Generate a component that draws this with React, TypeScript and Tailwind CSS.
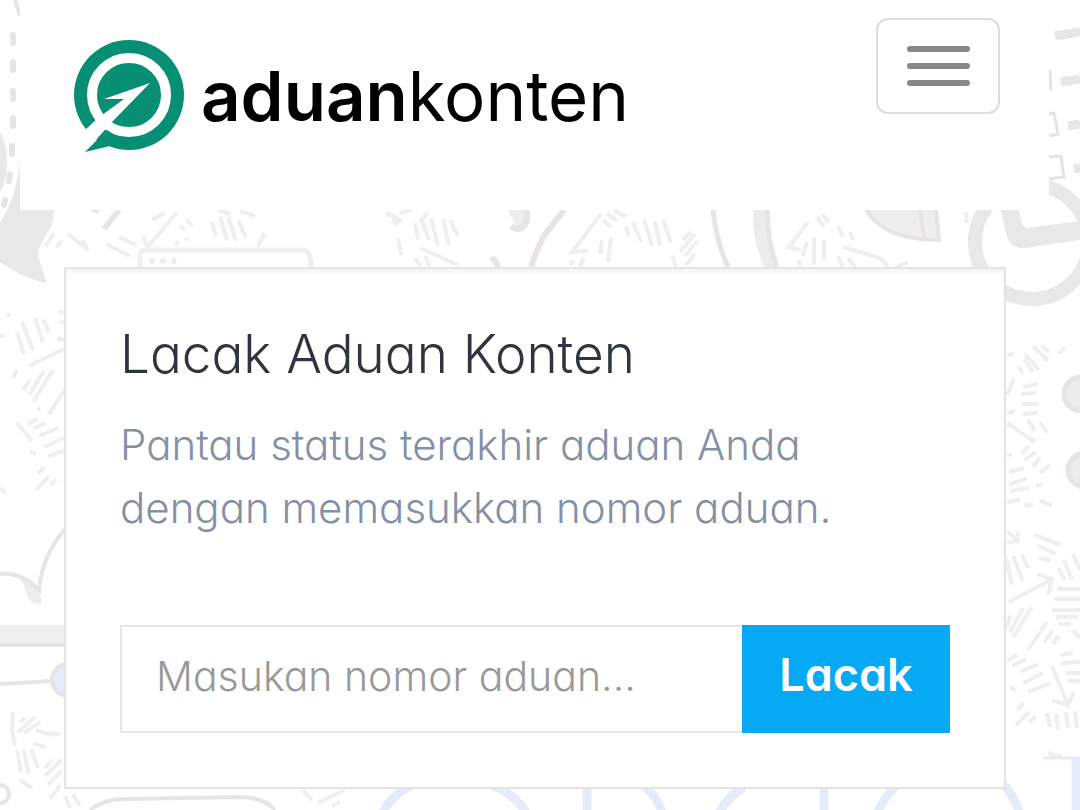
import React, { useState } from 'react';

const HATCHES = [
  // top strip
  'M152 220L165 213M177 212L148 247M186 219L192 226M180 226L185 230M212 222L216 237M220 217L227 240M228 217L236 241M238 220L246 238M218 210L230 214M240 211L255 216M258 246L265 233M45 247L54 233M56 247L62 241M68 234L88 250L82 240M119 237L136 245M106 244L130 256M143 236L147 247M186 238L187 241M176 245L178 241',
  'M386 212L402 222M392 220L398 225M400 213L412 210M420 222L428 212M415 223L418 240M421 218L429 240M431 218L438 246M443 219L449 245M450 220L458 236M398 238L401 255M420 248L458 265M415 258L420 266M425 256L430 266',
  'M601 214L572 252L588 251M603 220L611 227M607 213L617 221M614 210L626 217M602 240L600 254M611 238L608 262M626 227L629 236M633 222L641 242M644 219L652 246M655 221L660 246M663 220L671 243M683 240L691 232M680 252L695 234M685 256L697 241M672 256L676 267M686 265L695 254M570 265L573 260M580 266L584 258',
  'M808 222L789 247L801 250M817 217L824 227M822 215L829 222M838 226L843 237M850 232L853 240M807 242L803 256M814 237V265M824 240V260M843 247L880 258L888 266M798 260L801 267M838 256L843 267M848 258L855 267M897 267L908 262M966 212L967 223',
  // left column
  'M8 313L9 317M22 322L33 350M17 332L24 354M35 318L43 343M43 319L49 332M0 337L4 335M29 366L66 348M58 311L66 314M59 321L66 323M57 338L66 341M13 378L17 370M23 390L30 380M29 395L44 371M33 402L53 370M49 414L66 388M38 411L40 407M17 423L32 441M28 424L37 419M33 429L45 423M39 436L58 428M44 447L66 437M48 456L66 450M30 451L36 454M38 474L44 467M36 490L49 476M50 484L57 480M0 488L6 494',
  'M13 712L12 730L15 745M20 722L25 718M18 732L35 717M24 733L40 722M36 730L52 735M33 743L45 747M17 750L21 772M23 749L29 774M31 749L38 768M20 780L32 788M45 768L52 760M45 776L61 760M48 785L62 770M44 733L60 734M50 799L60 785M65 796L70 808M73 794L80 806',
  // right column
  'M1007 355L1014 354M1025 354L1039 370M1033 346L1048 361M1042 346L1049 352M1018 366L1023 373M1024 359L1033 372M1058 354L1065 348M1007 395L1014 379M1023 387L1038 384M1021 394L1036 393M1022 404H1038M1023 414L1038 413M1028 420L1035 431M1040 422L1047 433M1007 423L1035 442M1007 413L1015 411M1022 453L1029 446M1025 460L1036 452M1033 467L1040 457M1040 473L1050 465M1007 456L1012 454M1009 472L1024 468M1009 485L1027 478M1010 491L1030 488M1036 486L1043 484',
  'M1007 502L1020 500M1040 500L1052 506M1025 506L1033 504M1007 531L1017 540L1018 531M1007 543L1017 540M1034 535L1061 545M1038 546L1056 554M1039 558L1050 561M1006 558L1012 585M1013 556L1023 581M1022 555L1028 568M1009 602L1052 579M1037 574L1052 579L1048 595M1058 568L1065 580M1064 560L1072 580M1073 554L1080 570M1057 589H1080M1054 599H1080M1052 610H1080M1056 617H1078M1058 624H1071M1007 628L1010 615M1010 632L1023 608M1013 637L1032 607M1028 650L1047 622M1044 643L1052 631M1053 644L1059 636M1073 630L1080 638',
  'M1007 661L1017 655M1012 666L1026 659M1020 672L1038 664M1023 683L1043 673M1028 692L1050 683M1052 666L1068 705L1074 692M1052 700L1068 705M1060 655L1073 653M1061 663L1080 662M1066 673H1080M1067 681H1080M1010 687L1016 691M1018 710L1023 703M1016 725L1029 712M1029 722L1036 717M1047 713L1050 727M1056 714L1058 730M1066 712L1068 728M1075 711L1077 728M1048 753L1062 757',
  // below the card
  'M303 790L312 800M318 803L345 790M332 806L340 802',
];

function DoodleBackground() {
  return (
    <svg
      aria-hidden="true"
      className="absolute inset-0 w-full h-full"
      viewBox="0 0 1080 810"
      preserveAspectRatio="xMidYMin slice"
      fill="none"
    >
      <g stroke="#efefef" strokeWidth={4}>
        {HATCHES.map((d, index) => (
          <path key={index} d={d} />
        ))}
      </g>

      {/* Solid grey shapes */}
      <g fill="#e8e8e8">
        <path d="M0 132Q8 145 7 165Q6 182 0 192Z" />
        <path d="M0 222Q16 200 20 160V210H54C54 232 38 240 38 257L47 283Q26 280 0 262Z" />
        <path d="M1001 210L1006 233Q1010 250 1026 248L1080 240V221L1027 228Q1021 227 1019 210Z" />
      </g>
      <circle cx={1032} cy={242} r={57} stroke="#e8e8e8" strokeWidth={14} />
      <path d="M1055 36L1080 32M1061 82L1080 79M1068 126L1080 124M1074 169L1080 168" stroke="#e6e6e6" strokeWidth={9} />
      <path d="M1049 114L1054 113L1058 134L1049 136M1049 157L1061 156L1064 177L1049 179M1050 70L1051 91" stroke="#e4e4e4" strokeWidth={3} />

      {/* Browser window */}
      <path d="M140 268V256Q140 250 146 250H303Q311 250 311 268" stroke="#efefef" strokeWidth={5} />
      <g fill="#eeeeee">
        <circle cx={152} cy={261} r={3} />
        <circle cx={163} cy={261} r={3} />
        <circle cx={174} cy={261} r={3} />
      </g>

      {/* Hand drawn outlines */}
      <path d="M508 210H526Q529 225 519 229Q512 222 508 210Z" fill="#ededed" />
      <path d="M753 210H768Q768 245 778 267H764Q752 240 753 210Z" fill="#ececec" />
      <path d="M866 210C880 232 905 240 939 240L937 210Z" fill="#eeeeee" />
      <path d="M20 575L39 590L42 603Q34 607 28 597Z" fill="#ededeb" />
      <rect y={625} width={66} height={20} fill="#efefed" />
      <g stroke="#e7e4e1" strokeWidth={4}>
        <path d="M13 35V43M13 62V70M13 91V99M13 118V126M12 146V154M10 174L9 181M5 200L4 205" strokeWidth={6} strokeLinecap="round" />
        <path d="M15 0L20 16" />
        <path d="M119 210L104 229" strokeWidth={6} />
        <path d="M92 210L99 211" />
        <path d="M526 210Q530 225 519 229Q514 229 511 226M564 210L543 237Q537 250 531 267M492 257L499 267" strokeWidth={6} />
        <path d="M713 210Q716 240 728 267M767 210Q768 245 777 267" strokeWidth={5} />
        <path d="M866 210C880 232 905 240 939 240L936 210M920 210L924 238" />
        <path d="M0 574Q22 572 39 590Q42 555 66 528" />
        <path d="M0 645H66M0 684L52 681" />
        <circle cx={68} cy={680} r={16} fill="#e6eafc" />
        <circle cx={0} cy={794} r={9} />
        <path d="M90 810Q104 799 125 799L240 797Q265 798 275 810" />
        <circle cx={1081} cy={394} r={17} fill="#ececec" strokeWidth={5} />
        <circle cx={1085} cy={470} r={17} fill="#ececec" strokeWidth={5} />
      </g>

      {/* Blue lettering cut off by the bottom edge */}
      <g stroke="#e6ebfa" strokeWidth={9}>
        <path d="M383 812Q400 780 450 776Q505 780 526 812" />
        <path d="M587 788V810M644 786Q656 795 662 812M720 812Q728 796 744 787M824 788V810M878 812Q884 797 896 786M1003 784Q1014 796 1019 812M1076 759V810" />
        <path d="M1043 758H1080" strokeWidth={3} />
      </g>
    </svg>
  );
}

function LogoMark() {
  return (
    <svg aria-hidden="true" className="w-28 h-28 shrink-0" viewBox="73 39 112 112">
      <circle cx={129} cy={94} r={55} fill="#068f72" />
      <circle cx={129} cy={94} r={37} fill="none" stroke="#ffffff" strokeWidth={10} />
      <path d="M150 82L104 98L124 98L98 117L86 128L70 142L85 151L112 121Z" fill="#ffffff" />
      <path d="M85 151L107 129L118 136L124 146L110 145Z" fill="#068f72" />
    </svg>
  );
}

export default function App() {
  const [ticket, setTicket] = useState('');

  const handleSubmit = (e: React.FormEvent) => {
    e.preventDefault();
  };

  return (
    <div className="relative min-h-screen overflow-hidden bg-white pb-5 font-['Inter',sans-serif] font-light">
      <DoodleBackground />

      {/* Header */}
      <header className="relative ml-5 mr-[31px] flex h-[210px] items-start justify-between bg-white pl-[53px] pr-[49px] pt-[18px]">
        <a href="#" className="mt-[22px] flex items-center gap-4 text-[69px] leading-[112px] text-black">
          <LogoMark />
          <span>
            <span className="font-semibold">aduan</span>
            <span className="font-normal">konten</span>
          </span>
        </a>
        <button
          type="button"
          aria-label="Menu"
          className="flex h-24 w-[124px] shrink-0 flex-col items-center justify-center gap-[11px] rounded-xl border-2 border-[#dddddd]"
        >
          <span className="h-[6px] w-[63px] rounded-full bg-[#888888]"></span>
          <span className="h-[6px] w-[63px] rounded-full bg-[#888888]"></span>
          <span className="h-[6px] w-[63px] rounded-full bg-[#888888]"></span>
        </button>
      </header>

      {/* Tracking card */}
      <main className="relative ml-16 mr-[74px] mt-[57px] border-2 border-[#e3e4e5] bg-white px-[54px] pb-[54px] pt-[50px] shadow-[inset_0_3px_4px_#f3f3f3] [font-feature-settings:'cv11']">
        <h1 className="text-[53px] leading-[70px] text-[#2f3440]">Lacak Aduan Konten</h1>
        <p className="mt-6 text-[42px] leading-[63px] text-[#8590a5]">
          Pantau status terakhir aduan Anda
          <br />
          dengan memasukkan nomor aduan.
        </p>
        <form onSubmit={handleSubmit} className="mt-[86px] flex h-[108px]">
          <input
            type="text"
            aria-label="Nomor aduan"
            placeholder="Masukan nomor aduan..."
            value={ticket}
            onChange={(e) => setTicket(e.target.value)}
            className="min-w-0 flex-1 border-2 border-r-0 border-[#e5e7e9] bg-white px-[34px] pb-1 text-[41px] text-[#555555] outline-none placeholder:text-[#999999]"
          />
          <button type="submit" className="w-[208px] bg-[#05a9f4] pb-2 text-[45px] font-semibold text-white">
            Lacak
          </button>
        </form>
      </main>
    </div>
  );
}
